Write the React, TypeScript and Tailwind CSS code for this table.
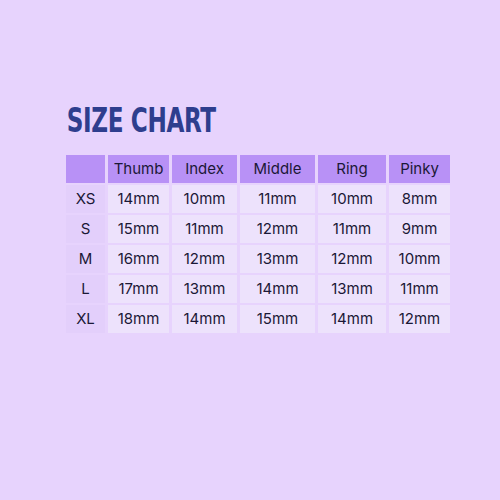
const sizes = [
  { size: 'XS', values: ['14mm', '10mm', '11mm', '10mm', '8mm'] },
  { size: 'S', values: ['15mm', '11mm', '12mm', '11mm', '9mm'] },
  { size: 'M', values: ['16mm', '12mm', '13mm', '12mm', '10mm'] },
  { size: 'L', values: ['17mm', '13mm', '14mm', '13mm', '11mm'] },
  { size: 'XL', values: ['18mm', '14mm', '15mm', '14mm', '12mm'] },
]

const fingers = ['Thumb', 'Index', 'Middle', 'Ring', 'Pinky']

export default function App() {
  return (
    <div className="w-[500px] h-[500px] bg-[#e7d3fd] pt-[101px] pl-[66px] font-['Inter',sans-serif] text-[#1b1836]">
      <h1 className="pl-[1px] origin-left scale-x-[0.78] text-[33px] leading-[40px] font-bold font-stretch-condensed tracking-[-0.5px] text-[#2e3e8e] font-['DejaVu_Sans_Condensed','DejaVu_Sans',sans-serif]">
        SIZE CHART
      </h1>

      <div className="mt-[14px] grid grid-cols-[39px_61px_65px_75px_68px_61px] gap-x-[3px] gap-y-[2px] text-[15px]">
        <div className="h-[28px] bg-[#b891f6]" />
        {fingers.map((f) => (
          <div key={f} className="h-[28px] bg-[#b891f6] flex items-center justify-center">
            {f}
          </div>
        ))}

        {sizes.map((row) => (
          <>
            <div key={row.size} className="h-[28px] bg-[#e3cffb] flex items-center justify-center">
              {row.size}
            </div>
            {row.values.map((v, i) => (
              <div key={row.size + i} className="h-[28px] bg-[#ede2fc] flex items-center justify-center">
                {v}
              </div>
            ))}
          </>
        ))}
      </div>
    </div>
  )
}
